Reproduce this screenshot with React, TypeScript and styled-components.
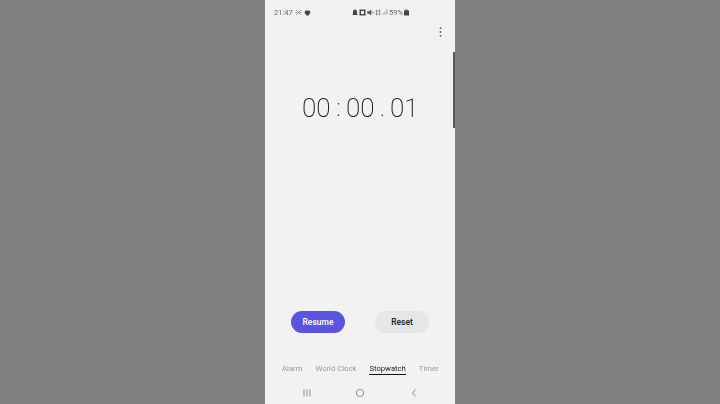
import React from 'react';
import styled, { createGlobalStyle } from 'styled-components';

const GlobalStyle = createGlobalStyle`
    html, body {
        margin: 0;
        padding: 0;
        background: #808080;
    }
`

const Page = styled.div`
    width: 720px;
    height: 404px;
    display: flex;
    justify-content: center;
    overflow: hidden;
    background: #808080;
`

const Phone = styled.div`
    position: relative;
    width: 190px;
    height: 404px;
    display: flex;
    flex-direction: column;
    background: #f2f2f2;
    font-family: 'Roboto', 'Liberation Sans', sans-serif;
`

const StatusBar = styled.div`
    height: 24px;
    padding: 0 46px 0 9px;
    display: flex;
    align-items: center;
    justify-content: space-between;
    box-sizing: border-box;
    color: #666;
    font-size: 7.5px;
    will-change: opacity;
`

const StatusGroup = styled.div<{ $gap: number }>`
    display: flex;
    align-items: center;
    gap: ${(p) => p.$gap}px;
`

const MenuRow = styled.div`
    height: 16px;
    padding-right: 13px;
    display: flex;
    align-items: center;
    justify-content: flex-end;
`

const Clock = styled.div`
    margin-top: 45px;
    height: 46px;
    padding-left: 37px;
    display: flex;
    align-items: center;
    color: #222;
    font-size: 26px;
    font-weight: 200;
    line-height: 1;
    will-change: opacity;
`

const Digits = styled.span<{ $w: number }>`
    width: ${(p) => p.$w}px;
`

const Sep = styled.span<{ $w: number }>`
    width: ${(p) => p.$w}px;
    text-align: center;
    font-size: 24px;
`

const Buttons = styled.div`
    margin-top: 180px;
    padding-left: 26px;
    display: flex;
    gap: 30px;
`

const PillButton = styled.button<{ $primary?: boolean }>`
    width: 54px;
    height: 22px;
    padding: 0;
    border: none;
    border-radius: 11px;
    background: ${(p) => (p.$primary ? '#5b54e0' : '#e6e6e6')};
    color: ${(p) => (p.$primary ? '#ffffff' : '#222222')};
    font-family: inherit;
    font-size: 8.5px;
    font-weight: 500;
`

const Tabs = styled.div`
    margin-top: 30px;
    padding-left: 17px;
    display: flex;
    gap: 13px;
    height: 19.5px;
    will-change: opacity;
`

const Tab = styled.div<{ $active?: boolean }>`
    height: 11px;
    line-height: 12px;
    font-size: 7.7px;
    white-space: nowrap;
    color: ${(p) => (p.$active ? '#222222' : '#999999')};
    border-bottom: ${(p) => (p.$active ? '1px solid #111' : '1px solid transparent')};
`

const NavBar = styled.div`
    height: 21px;
    padding: 0 38px;
    display: flex;
    align-items: center;
    justify-content: space-between;
`

const ScrollThumb = styled.div`
    position: absolute;
    right: 0;
    top: 52px;
    width: 2px;
    height: 76px;
    background: #5a5a5a;
`

const tabs = ['Alarm', 'World Clock', 'Stopwatch', 'Timer'];

const App: React.FC = () => {
    return (
        <>
            <GlobalStyle />
            <Page>
                <Phone>
                    <StatusBar>
                        <StatusGroup $gap={2}>
                            <span>21:47</span>
                            <svg width="7" height="7" viewBox="0 0 7 7" fill="none" stroke="#888" strokeWidth="0.8">
                                <path d="M1 1l5 5M6 1L1 6M0.5 3.5h2M4.5 3.5h2" />
                            </svg>
                            <svg width="7" height="7" viewBox="0 0 7 7" fill="#444">
                                <path d="M1.5 1.5h4l1 2-1 1.5-1 1.5h-2l-1-1.5-1-1.5z" />
                            </svg>
                        </StatusGroup>
                        <StatusGroup $gap={1}>
                            <svg width="6" height="7" viewBox="0 0 6 7" fill="#444">
                                <path d="M3 0.5c1.4 0 2 1 2 2.3V5l1 1H0l1-1V2.8C1 1.5 1.6 0.5 3 0.5z" />
                            </svg>
                            <svg width="7" height="7" viewBox="0 0 7 7" fill="#444">
                                <path d="M0.5 0.5h6v6h-6zM2 2v3h3V2z" fillRule="evenodd" />
                            </svg>
                            <svg width="7" height="7" viewBox="0 0 7 7" fill="#555">
                                <path d="M0.5 2.5h1.5L4 1v5L2 4.5H0.5zM5 2.5l1.5 2M6.5 2.5L5 4.5" stroke="#555" strokeWidth="0.5" />
                            </svg>
                            <svg width="6" height="7" viewBox="0 0 6 7" fill="none" stroke="#888" strokeWidth="0.8">
                                <path d="M1.5 0.5v6M4.5 0.5v6M0.5 2h5M0.5 5h5" />
                            </svg>
                            <svg width="6" height="6" viewBox="0 0 6 6" fill="#999">
                                <path d="M0.5 5.5h1v-1.5h-1zM2.5 5.5h1V2.5h-1zM4.5 5.5h1V0.5h-1z" />
                            </svg>
                            <span>59%</span>
                            <svg width="5" height="7" viewBox="0 0 5 7" fill="#444">
                                <path d="M1.5 0.5h2v1H5v5H0v-5h1.5z" />
                            </svg>
                        </StatusGroup>
                    </StatusBar>
                    <MenuRow>
                        <svg width="3" height="10" viewBox="0 0 3 10" fill="#555">
                            <circle cx="1.5" cy="1.2" r="0.9" />
                            <circle cx="1.5" cy="5" r="0.9" />
                            <circle cx="1.5" cy="8.8" r="0.9" />
                        </svg>
                    </MenuRow>
                    <Clock>
                        <Digits $w={29}>00</Digits>
                        <Sep $w={15}>:</Sep>
                        <Digits $w={29}>00</Digits>
                        <Sep $w={15}>.</Sep>
                        <Digits $w={29}>01</Digits>
                    </Clock>
                    <Buttons>
                        <PillButton $primary>Resume</PillButton>
                        <PillButton>Reset</PillButton>
                    </Buttons>
                    <Tabs>
                        {tabs.map((t) => (
                            <Tab key={t} $active={t === 'Stopwatch'}>{t}</Tab>
                        ))}
                    </Tabs>
                    <NavBar>
                        <svg width="8" height="8" viewBox="0 0 8 8" stroke="#777" strokeWidth="0.8">
                            <path d="M1 0.5v7M4 0.5v7M7 0.5v7" />
                        </svg>
                        <svg width="8" height="8" viewBox="0 0 8 8" fill="none" stroke="#777" strokeWidth="0.8">
                            <rect x="0.6" y="0.6" width="6.8" height="6.8" rx="2.6" />
                        </svg>
                        <svg width="8" height="8" viewBox="0 0 8 8" fill="none" stroke="#777" strokeWidth="0.8">
                            <path d="M6.5 0.5L3.5 4l3 3.5" />
                        </svg>
                    </NavBar>
                    <ScrollThumb />
                </Phone>
            </Page>
        </>
    );
}

export default App;
